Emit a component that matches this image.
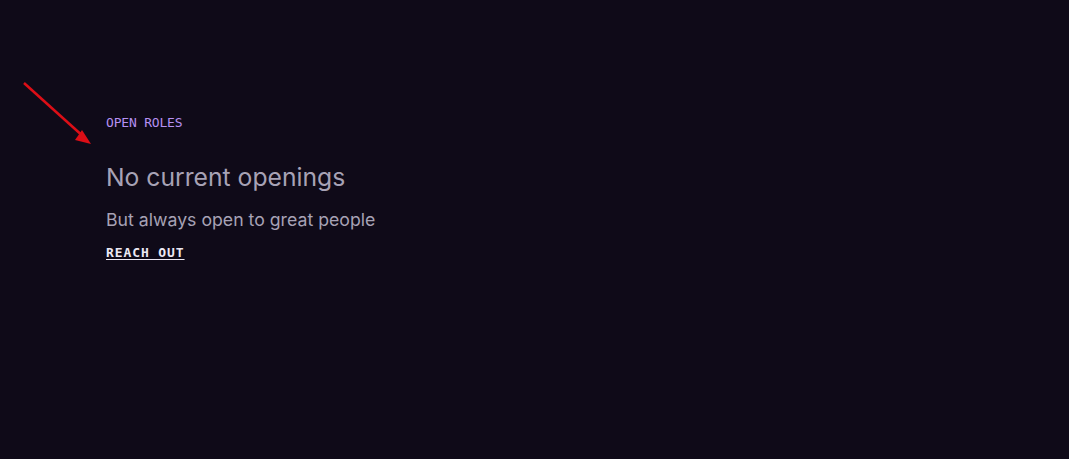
export default function App() {
  return (
    <div className="relative min-h-[459px] w-full bg-[#0f0a18] overflow-hidden">
      <svg className="absolute left-0 top-0" width="120" height="160" viewBox="0 0 120 160">
        <line x1="24" y1="83" x2="85" y2="138" stroke="#dc0e16" strokeWidth="2.5" />
        <polygon points="91,144 75,140 82,130" fill="#dc0e16" />
      </svg>

      <section className="pl-[106px] pt-[115px]">
        <p className="font-['DejaVu_Sans_Mono',monospace] text-[13px] leading-4 tracking-[-0.2px] text-[#b690f2]">
          OPEN ROLES
        </p>
        <h2 className="mt-[30px] font-['Inter',sans-serif] text-[24.7px] leading-8 text-[#a7a2b5]">
          No current openings
        </h2>
        <p className="mt-[13px] font-['Inter',sans-serif] text-[17.7px] leading-7 text-[#a7a2b5]">
          But always open to great people
        </p>
        <a
          href="#"
          className="mt-[9px] inline-block font-['DejaVu_Sans_Mono',monospace] text-[13px] font-bold leading-5 tracking-[0.9px] text-[#ece8f4] underline underline-offset-2"
        >
          REACH OUT
        </a>
      </section>
    </div>
  )
}
